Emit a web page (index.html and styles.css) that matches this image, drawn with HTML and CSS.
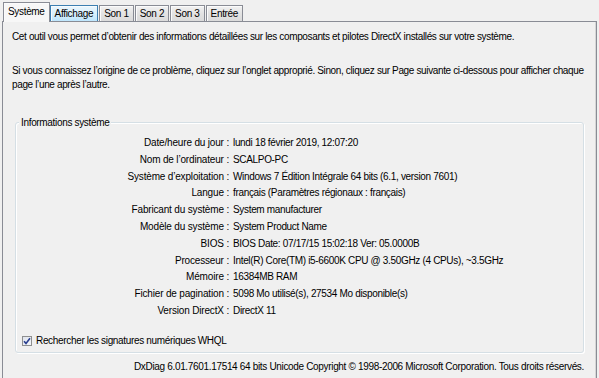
FILE: index.html
```html
<!DOCTYPE html>
<html lang="fr">
<head>
<meta charset="utf-8">
<title>DxDiag - Système</title>
<link rel="stylesheet" href="styles.css">
</head>
<body>
<div class="window">
  <div class="tabs">
    <div class="tab active">Système</div>
    <div class="tab hover">Affichage</div>
    <div class="tab">Son 1</div>
    <div class="tab">Son 2</div>
    <div class="tab">Son 3</div>
    <div class="tab">Entrée</div>
  </div>
  <div class="panel">
    <p class="intro">Cet outil vous permet d’obtenir des informations détaillées sur les composants et pilotes DirectX installés sur votre système.</p>
    <p class="intro second">Si vous connaissez l’origine de ce problème, cliquez sur l’onglet approprié. Sinon, cliquez sur Page suivante ci-dessous pour afficher chaque page l’une après l’autre.</p>
    <div class="group">
      <div class="legend">Informations système</div>
      <div class="rows">
        <div class="label">Date/heure du jour :</div><div class="value">lundi 18 février 2019, 12:07:20</div>
        <div class="label">Nom de l’ordinateur :</div><div class="value">SCALPO-PC</div>
        <div class="label">Système d’exploitation :</div><div class="value">Windows 7 Édition Intégrale 64 bits (6.1, version 7601)</div>
        <div class="label">Langue :</div><div class="value">français (Paramètres régionaux : français)</div>
        <div class="label">Fabricant du système :</div><div class="value">System manufacturer</div>
        <div class="label">Modèle du système :</div><div class="value">System Product Name</div>
        <div class="label">BIOS :</div><div class="value">BIOS Date: 07/17/15 15:02:18 Ver: 05.0000B</div>
        <div class="label">Processeur :</div><div class="value">Intel(R) Core(TM) i5-6600K CPU @ 3.50GHz (4 CPUs), ~3.5GHz</div>
        <div class="label">Mémoire :</div><div class="value">16384MB RAM</div>
        <div class="label">Fichier de pagination :</div><div class="value">5098 Mo utilisé(s), 27534 Mo disponible(s)</div>
        <div class="label">Version DirectX :</div><div class="value">DirectX 11</div>
      </div>
      <label class="check">
        <span class="box"><svg width="8" height="8" viewBox="0 0 8 8"><path d="M1 4.2 L3 6.4 L7 1.2" fill="none" stroke="#2a3f8f" stroke-width="1.6"/></svg></span>
        Rechercher les signatures numériques WHQL
      </label>
    </div>
    <div class="footer">DxDiag 6.01.7601.17514 64 bits Unicode Copyright © 1998-2006 Microsoft Corporation. Tous droits réservés.</div>
  </div>
</div>
</body>
</html>
```
FILE: styles.css
```css
html, body {
  margin: 0;
  padding: 0;
  background: #f0f0f0;
}
body {
  font-family: "Liberation Sans", Arial, sans-serif;
  font-size: 10px;
  letter-spacing: -0.33px;
  color: #000;
  width: 599px;
  height: 378px;
  overflow: hidden;
}
.window {
  padding: 2px 2px 0 2px;
}
.tabs {
  display: flex;
  align-items: flex-end;
  height: 19px;
  padding-left: 1px;
  position: relative;
  z-index: 1;
}
.tab {
  height: 15px;
  line-height: 15px;
  padding: 0 4px;
  border: 1px solid #898c95;
  border-bottom: none;
  background: linear-gradient(#f2f2f2, #e3e3e3 50%, #dbdbdb);
  margin-right: 1px;
  box-shadow: inset 1px 1px 0 #fbfbfb;
}
.tab.hover {
  background: linear-gradient(#eaf6fd, #d9f0fc 50%, #bee6fd);
  border-color: #3c7fb1;
  box-shadow: inset 1px 1px 0 #f6fbfe;
}
.tab.active {
  height: 19px;
  line-height: 17px;
  background: #f7f7f7;
  margin-bottom: -1px;
  margin-right: 0;
  padding: 0 4px;
}
.panel {
  border: 1px solid #898c95;
  border-bottom: none;
  height: 360px;
  box-sizing: border-box;
  padding: 8px 12px 0 9px;
  box-shadow: inset -1px 0 0 #d6d6d6;
}
.intro {
  margin: 0 -6px 0 0;
  line-height: 14px;
  letter-spacing: -0.36px;
}
.intro.second {
  margin-top: 20px;
}
.group {
  margin: 30px 0 0 3px;
  border: 1px solid #d5dfe5;
  border-radius: 3px;
  box-shadow: inset 1px 1px 0 #fff, 1px 1px 0 #fff;
  height: 231px;
  box-sizing: border-box;
  position: relative;
  padding-top: 12px;
}
.legend {
  position: absolute;
  top: -7px;
  left: 3px;
  padding: 0 2px;
  background: #f0f0f0;
  line-height: 14px;
}
.rows {
  display: grid;
  grid-template-columns: 213px 1fr;
  column-gap: 4px;
  line-height: 16.8px;
}
.label {
  text-align: right;
  letter-spacing: -0.17px;
}
.check {
  display: flex;
  align-items: center;
  gap: 4px;
  margin: 14px 0 0 6px;
  line-height: 14px;
}
.box {
  width: 10px;
  height: 10px;
  border: 1px solid #8e8f8f;
  box-sizing: border-box;
  background: linear-gradient(135deg, #dfe3ec, #f4f6fa);
  display: flex;
  align-items: center;
  justify-content: center;
}
.footer {
  text-align: right;
  line-height: 14px;
  margin-top: 7px;
}
```
